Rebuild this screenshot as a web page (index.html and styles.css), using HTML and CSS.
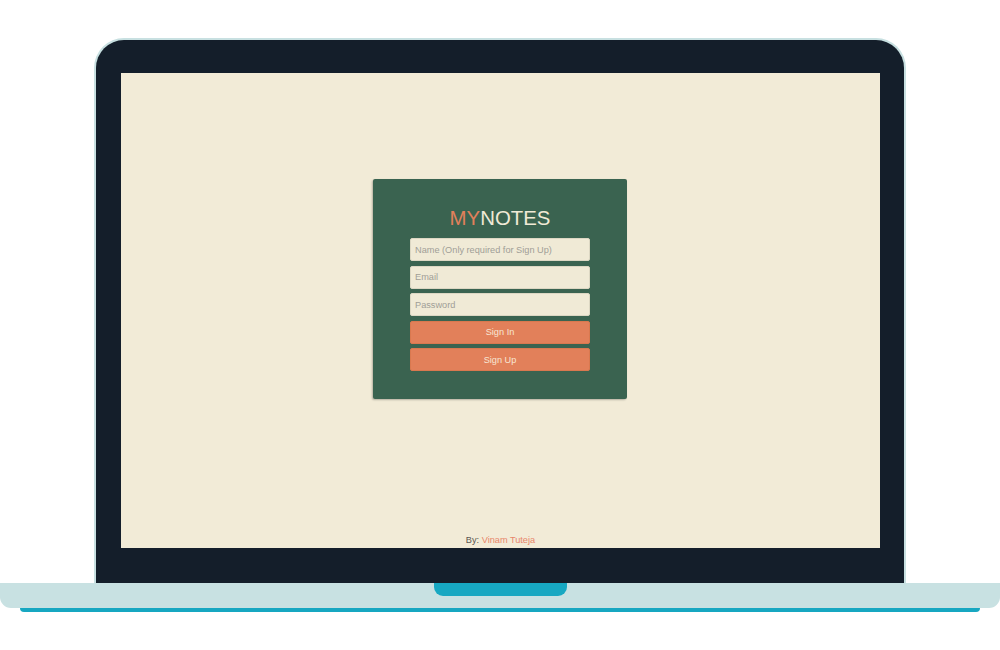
FILE: index.html
```html
<!DOCTYPE html>
<html>
<head>
<meta charset="utf-8">
<title>MyNotes</title>
<link rel="stylesheet" href="styles.css">
</head>
<body>
<div class="laptop">
  <div class="bezel">
    <div class="screen">
      <form class="card">
        <h1 class="title"><span class="my">MY</span><span class="notes">NOTES</span></h1>
        <input class="field" type="text" placeholder="Name (Only required for Sign Up)">
        <input class="field" type="email" placeholder="Email">
        <input class="field" type="password" placeholder="Password">
        <button class="btn" type="button">Sign In</button>
        <button class="btn" type="button">Sign Up</button>
      </form>
      <div class="footer">By: <span class="author">Vinam Tuteja</span></div>
    </div>
  </div>
  <div class="base">
    <div class="notch"></div>
  </div>
  <div class="strip"></div>
</div>
</body>
</html>
```
FILE: styles.css
```css
html, body {
  margin: 0;
  padding: 0;
  background: #ffffff;
  font-family: "Liberation Sans", Arial, sans-serif;
}
.laptop {
  width: 1000px;
  height: 650px;
  padding-top: 38px;
  box-sizing: border-box;
}
.bezel {
  width: 812px;
  height: 545px;
  margin: 0 auto 0 94px;
  box-sizing: border-box;
  background: #141e2a;
  border: 2px solid #c8e0e1;
  border-bottom: none;
  border-radius: 30px 30px 0 0;
  padding: 33px 24px 35px 25px;
}
.screen {
  width: 759px;
  height: 475px;
  background: #f2ebd7;
  display: flex;
  flex-direction: column;
  align-items: center;
}
.card {
  margin-top: 106px;
  margin-right: 1px;
  width: 254px;
  height: 220px;
  box-sizing: border-box;
  background: #3a6350;
  border-radius: 2px;
  box-shadow: -1px 1px 2px rgba(0, 0, 0, 0.25);
  padding: 27px 37px 0 37px;
  display: flex;
  flex-direction: column;
  gap: 4.5px;
}
.title {
  margin: 0 0 3.5px 0;
  font-size: 20.4px;
  line-height: 24px;
  font-weight: normal;
  text-align: center;
}
.my { color: #e1805b; }
.notes { color: #f0ead6; }
.field {
  width: 180px;
  height: 23px;
  box-sizing: border-box;
  margin: 0;
  padding: 0 4px;
  background: #f0ead6;
  border: 1px solid #dcd7c3;
  border-radius: 2px;
  font-family: "Liberation Sans", Arial, sans-serif;
  font-size: 9.2px;
  color: #555;
  outline: none;
}
.field::placeholder {
  color: #a09e97;
}
.btn {
  width: 180px;
  height: 23px;
  box-sizing: border-box;
  margin: 0;
  padding: 0;
  background: #e2805a;
  border: 1px solid #d9784f;
  border-radius: 2px;
  color: #f8e6d4;
  font-family: "Liberation Sans", Arial, sans-serif;
  font-size: 9.2px;
}
.footer {
  margin-top: auto;
  padding-bottom: 2px;
  font-size: 9.2px;
  line-height: 11px;
  color: #5a5650;
}
.author { color: #e8866a; }
.base {
  width: 1000px;
  height: 25px;
  background: #c8e1e2;
  border-radius: 0 0 11px 11px;
}
.notch {
  width: 133px;
  height: 13px;
  margin: 0 auto;
  position: relative;
  left: 0.5px;
  background: #17a8c2;
  border-radius: 0 0 9px 9px;
}
.strip {
  width: 960px;
  height: 4px;
  margin: 0 auto;
  background: #17a7c1;
  border-radius: 0 0 4px 4px;
}
```
